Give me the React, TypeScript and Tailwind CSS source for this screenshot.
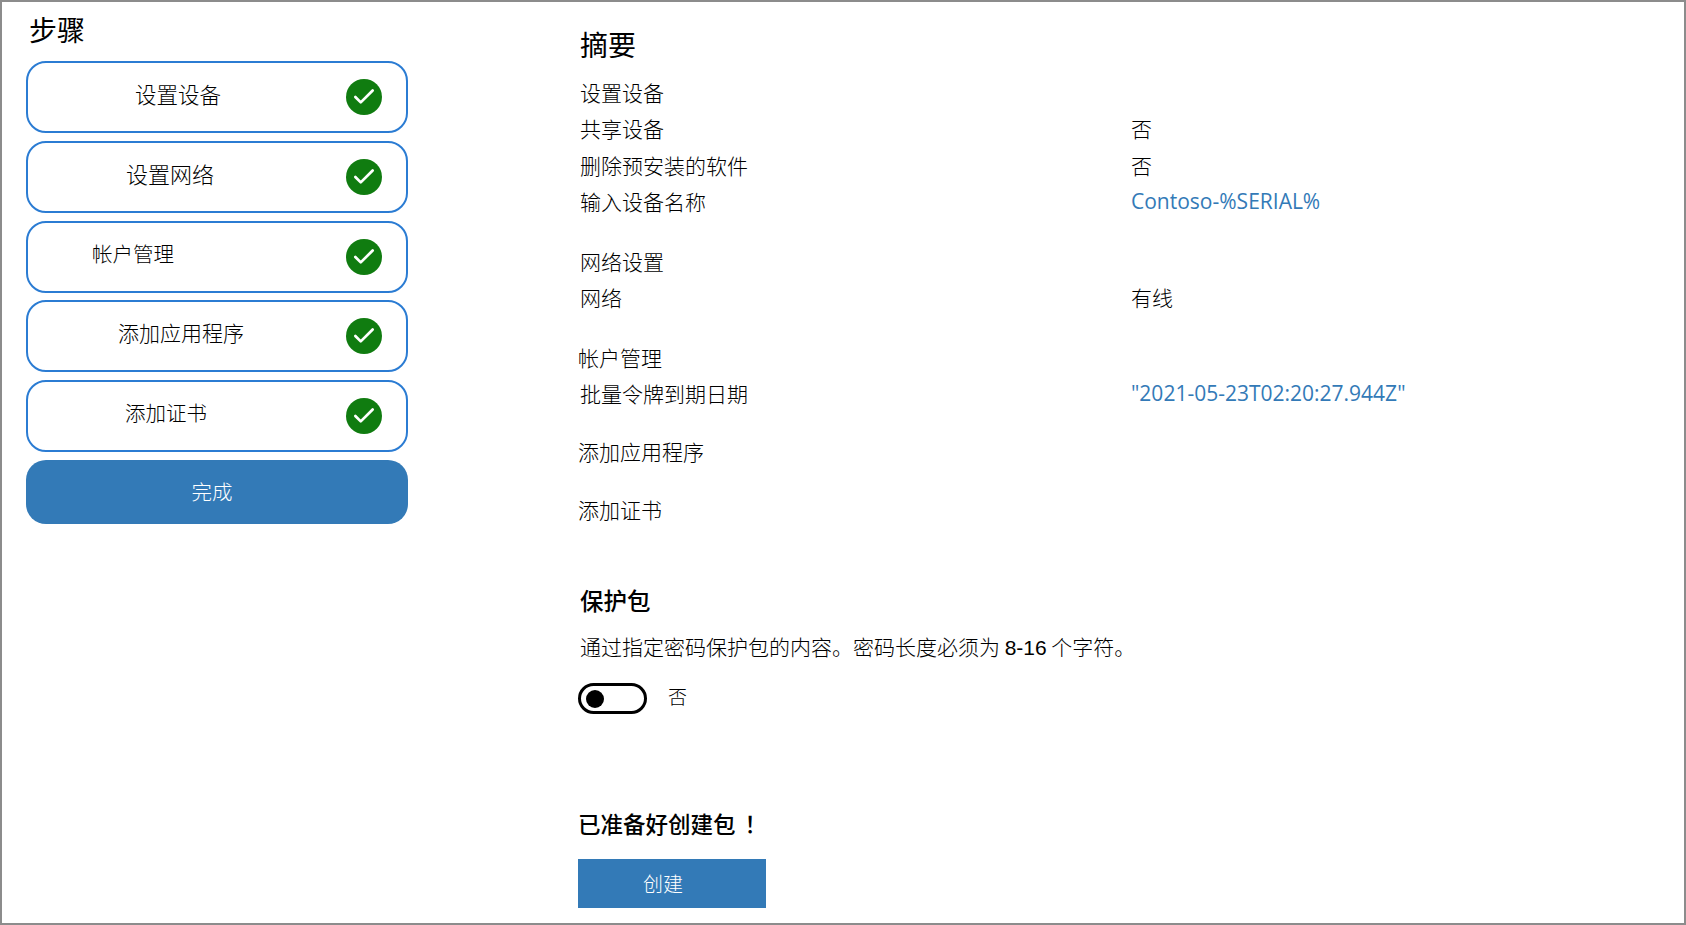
import { Check } from "lucide-react";

const cjk = "font-['Noto_Sans_CJK_SC','Noto_Sans',sans-serif]";

const steps = [
  { label: "设置设备", pad: "pl-[107px]", text: "-mt-[7px] text-[21.5px]" },
  { label: "设置网络", pad: "pl-[98px]", text: "-mt-[7px] text-[22px]" },
  { label: "帐户管理", pad: "pl-[64px]", text: "-mt-[6px] text-[20.5px]" },
  { label: "添加应用程序", pad: "pl-[90px]", text: "-mt-[8px] text-[21px]" },
  { label: "添加证书", pad: "pl-[97px]", text: "-mt-[8px] text-[20.5px]" },
];

function StepCard({ label, pad, text }: { label: string; pad: string; text: string }) {
  return (
    <div className={`flex h-[72px] items-center justify-between rounded-[20px] border-2 border-[#2b7cd3] pr-[24px] ${pad}`}>
      <span className={`font-light leading-none text-black ${text}`}>{label}</span>
      <span className="flex h-9 w-9 items-center justify-center rounded-full bg-[#107c10]">
        <Check size={26} strokeWidth={2.5} className="text-white" />
      </span>
    </div>
  );
}

function Row({ label, value, link, inset }: { label: string; value?: string; link?: boolean; inset?: boolean }) {
  return (
    <div className="grid h-[36.5px] grid-cols-[551px_1fr] items-center text-[21px] font-light leading-none">
      <span className={inset ? "-ml-[2px] text-black" : "text-black"}>{label}</span>
      {value && (
        <span className={link ? "font-['Open_Sans',sans-serif] font-normal text-[#337ab7]" : "text-black"}>{value}</span>
      )}
    </div>
  );
}

export default function App() {
  return (
    <div className={`flex h-[925px] w-[1686px] border-2 border-[#8c8c8c] bg-white ${cjk}`}>
      {/* Steps column */}
      <aside className="w-[578px] shrink-0 pl-[24px] pt-[9px]">
        <h2 className="mb-[14px] pl-[3px] text-[28px] leading-[36px] text-black">步骤</h2>
        <div className="flex w-[382px] flex-col gap-[7.75px]">
          {steps.map((s) => (
            <StepCard key={s.label} {...s} />
          ))}
          <button className="h-[64px] rounded-[20px] bg-[#337ab7] pr-[10px] text-[20.5px] font-light text-white">完成</button>
        </div>
      </aside>

      {/* Summary column */}
      <main className="flex-1 pt-[24px]">
        <h2 className="mb-[12px] text-[28px] leading-[36px] text-black">摘要</h2>
        <Row label="设置设备" />
        <Row label="共享设备" value="否" />
        <Row label="删除预安装的软件" value="否" />
        <Row label="输入设备名称" value="Contoso-%SERIAL%" link />
        <div className="mt-[23px]">
          <Row label="网络设置" />
          <Row label="网络" value="有线" />
        </div>
        <div className="mt-[23px]">
          <Row label="帐户管理" inset />
          <Row label="批量令牌到期日期" value={'"2021-05-23T02:20:27.944Z"'} link />
        </div>
        <div className="mt-[21px]">
          <Row label="添加应用程序" inset />
        </div>
        <div className="mt-[22px]">
          <Row label="添加证书" inset />
        </div>

        <h3 className="mt-[56px] text-[23.5px] font-medium leading-[32px] text-black">保护包</h3>
        <p className="mt-[15px] text-[21px] font-light leading-[30px] text-black">
          通过指定密码保护包的内容。密码长度必须为 <span className="font-['Liberation_Sans',sans-serif] font-normal">8-16</span> 个字符。
        </p>
        <div className="-ml-[2px] mt-[20px] flex items-center gap-[21px]">
          <span className="flex h-[31px] w-[69px] items-center rounded-full border-[3px] border-black pl-[5px]">
            <span className="h-[18px] w-[18px] rounded-full bg-black" />
          </span>
          <span className="-mt-[6px] text-[19px] font-light leading-none text-black">否</span>
        </div>

        <h3 className="-ml-[2px] mt-[94px] text-[22.5px] font-medium leading-[30px] text-black">
          已准备好创建包<span className="ml-[9px]">！</span>
        </h3>
        <button className="-ml-[2px] mt-[21px] block h-[49px] w-[188px] bg-[#337ab7] pr-[18px] text-[20px] font-light text-white">创建</button>
      </main>
    </div>
  );
}
